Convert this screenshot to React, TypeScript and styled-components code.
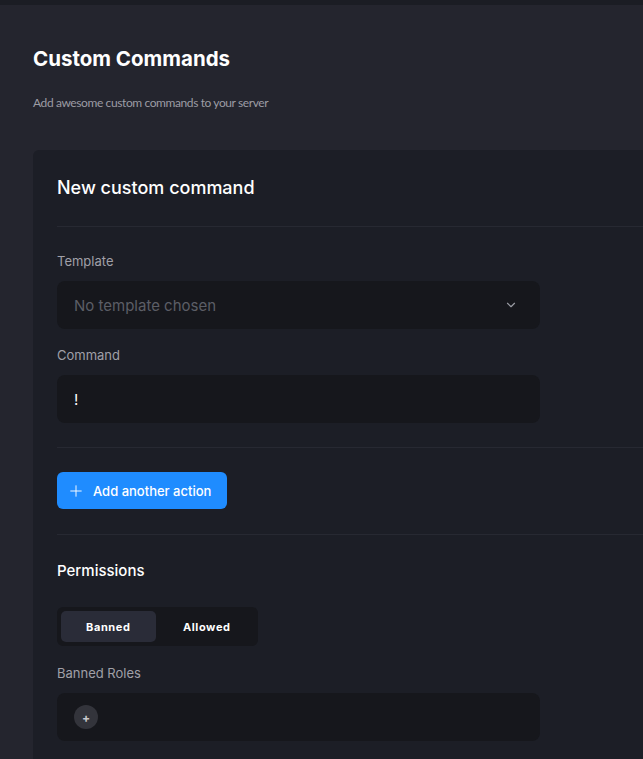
import styled, { createGlobalStyle } from "styled-components";

const GlobalStyle = createGlobalStyle`
  html, body {
    margin: 0;
    padding: 0;
    background: #24252e;
    overflow: hidden;
  }
  body {
    font-family: Inter, Lato, sans-serif;
    color: #ffffff;
  }
`;

export default function App() {
  return (
    <>
      <GlobalStyle />
      <StyledTopBar />
      <StyledPage>
        <StyledTitle>Custom Commands</StyledTitle>
        <StyledSubtitle>Add awesome custom commands to your server</StyledSubtitle>
        <StyledCard>
          <StyledCardTitle>New custom command</StyledCardTitle>
          <StyledDivider />
          <StyledLabel $top={26}>Template</StyledLabel>
          <StyledField>
            <StyledPlaceholder>No template chosen</StyledPlaceholder>
            <svg width="14" height="14" viewBox="0 0 24 24" fill="none" stroke="#9a9ca4" strokeWidth="2" strokeLinecap="round" strokeLinejoin="round">
              <path d="M6 9l6 6 6-6" />
            </svg>
          </StyledField>
          <StyledLabel $top={18}>Command</StyledLabel>
          <StyledField>
            <StyledValue>!</StyledValue>
          </StyledField>
          <StyledDivider $top={24} />
          <StyledButton>
            <svg width="14" height="14" viewBox="0 0 24 24" fill="none" stroke="#ffffff" strokeWidth="1.6" strokeLinecap="round">
              <path d="M12 3v18M3 12h18" />
            </svg>
            Add another action
          </StyledButton>
          <StyledDivider $top={25} />
          <StyledSectionTitle>Permissions</StyledSectionTitle>
          <StyledToggle>
            <StyledToggleOption $active>Banned</StyledToggleOption>
            <StyledToggleOption>Allowed</StyledToggleOption>
          </StyledToggle>
          <StyledLabel $top={19}>Banned Roles</StyledLabel>
          <StyledField>
            <StyledAddRole>+</StyledAddRole>
          </StyledField>
        </StyledCard>
      </StyledPage>
    </>
  );
}

const StyledTopBar = styled.div`
  height: 5px;
  background: #1b1d24;
`;

const StyledPage = styled.main`
  padding: 0 0 0 33px;
`;

const StyledTitle = styled.h1`
  margin: 0;
  padding-top: 40px;
  font-size: 20.5px;
  line-height: 28px;
  font-weight: 700;
  color: #ffffff;
`;

const StyledSubtitle = styled.p`
  margin: 22px 0 0;
  font-family: Lato, sans-serif;
  font-size: 12px;
  line-height: 16px;
  letter-spacing: -0.4px;
  color: #9c9ca4;
`;

const StyledCard = styled.section`
  margin-top: 39px;
  background: #1c1e26;
  border-radius: 6px 0 0 0;
  padding: 26px 0 30px 24px;
`;

const StyledCardTitle = styled.h2`
  margin: 0;
  font-size: 18px;
  line-height: 24px;
  font-weight: 500;
  color: #ffffff;
`;

const StyledDivider = styled.hr<{ $top?: number }>`
  margin: ${(p) => p.$top ?? 26}px 0 0;
  border: 0;
  height: 1px;
  background: #272932;
`;

const StyledLabel = styled.label<{ $top: number }>`
  display: block;
  margin: ${(p) => p.$top}px 0 12px;
  font-size: 13px;
  line-height: 16px;
  color: #a0a0a8;
`;

const StyledField = styled.div`
  width: 483px;
  height: 48px;
  box-sizing: border-box;
  padding: 0 22px 0 17px;
  border-radius: 8px;
  background: #16171c;
  display: flex;
  align-items: center;
  justify-content: space-between;
`;

const StyledPlaceholder = styled.span`
  font-size: 15px;
  color: #5c5e66;
`;

const StyledValue = styled.span`
  font-size: 15px;
  color: #ffffff;
`;

const StyledButton = styled.button`
  margin-top: 24px;
  height: 37px;
  padding: 0 16px 0 12px;
  display: inline-flex;
  align-items: center;
  gap: 10px;
  border: 0;
  border-radius: 6px;
  background: #1f8cff;
  color: #ffffff;
  font-family: Inter, Lato, sans-serif;
  font-size: 13px;
  font-weight: 500;
  cursor: pointer;
`;

const StyledSectionTitle = styled.h3`
  margin: 26px 0 0;
  font-size: 15px;
  line-height: 20px;
  font-weight: 500;
  color: #ffffff;
`;

const StyledToggle = styled.div`
  margin-top: 26px;
  width: 201px;
  height: 39px;
  box-sizing: border-box;
  padding: 4px;
  display: flex;
  gap: 4px;
  border-radius: 6px;
  background: #16171c;
`;

const StyledToggleOption = styled.button<{ $active?: boolean }>`
  flex: 1;
  border: 0;
  border-radius: 5px;
  background: ${(p) => (p.$active ? "#2a2c38" : "transparent")};
  color: #ffffff;
  font-family: Inter, Lato, sans-serif;
  font-size: 11px;
  font-weight: 700;
  letter-spacing: 0.6px;
  cursor: pointer;
`;

const StyledAddRole = styled.span`
  width: 24px;
  height: 24px;
  border-radius: 50%;
  background: #33343b;
  color: #c8c8cc;
  font-size: 12px;
  font-weight: 700;
  display: flex;
  align-items: center;
  justify-content: center;
`;
